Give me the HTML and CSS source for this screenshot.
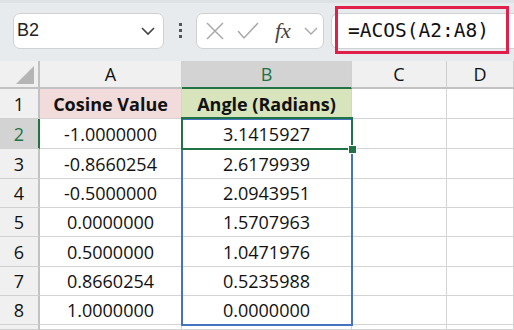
FILE: index.html
```html
<!DOCTYPE html>
<html>
<head>
<meta charset="utf-8">
<link rel="stylesheet" href="styles.css">
</head>
<body>
<div class="app">
  <div class="toolbar">
    <div class="namebox">
      <span class="name">B2</span>
      <svg class="chev" width="16" height="10" viewBox="0 0 16 10"><path d="M2 2 L8 8 L14 2" fill="none" stroke="#444" stroke-width="1.6"/></svg>
    </div>
    <div class="dots"><i></i><i></i><i></i></div>
    <div class="fxbox">
      <svg class="ico" width="20" height="20" viewBox="0 0 20 20"><path d="M2 2 L18 18 M18 2 L2 18" stroke="#a8a8a8" stroke-width="1.5" fill="none"/></svg>
      <svg class="ico" width="22" height="20" viewBox="0 0 22 20"><path d="M1 10 L7 17 L21 2" stroke="#a8a8a8" stroke-width="1.5" fill="none"/></svg>
      <span class="fx">fx</span>
      <svg class="chev2" width="14" height="10" viewBox="0 0 14 10"><path d="M1 2 L7 8 L13 2" fill="none" stroke="#a8a8a8" stroke-width="1.4"/></svg>
    </div>
    <div class="formula">
      <span class="ftext">=ACOS(A2:A8)</span>
      <div class="highlight"></div>
    </div>
  </div>
  <div class="grid">
    <div class="corner hdr"><span class="tri"></span></div>
    <div class="hdr col">A</div>
    <div class="hdr col selcol">B</div>
    <div class="hdr col">C</div>
    <div class="hdr col last">D</div>

    <div class="hdr row">1</div>
    <div class="cell pink bold">Cosine Value</div>
    <div class="cell green bold">Angle (Radians)</div>
    <div class="cell"></div><div class="cell"></div>

    <div class="hdr row selrow">2</div>
    <div class="cell">-1.0000000</div>
    <div class="cell">3.1415927</div>
    <div class="cell"></div><div class="cell"></div>

    <div class="hdr row">3</div>
    <div class="cell">-0.8660254</div>
    <div class="cell">2.6179939</div>
    <div class="cell"></div><div class="cell"></div>

    <div class="hdr row">4</div>
    <div class="cell">-0.5000000</div>
    <div class="cell">2.0943951</div>
    <div class="cell"></div><div class="cell"></div>

    <div class="hdr row">5</div>
    <div class="cell">0.0000000</div>
    <div class="cell">1.5707963</div>
    <div class="cell"></div><div class="cell"></div>

    <div class="hdr row">6</div>
    <div class="cell">0.5000000</div>
    <div class="cell">1.0471976</div>
    <div class="cell"></div><div class="cell"></div>

    <div class="hdr row">7</div>
    <div class="cell">0.8660254</div>
    <div class="cell">0.5235988</div>
    <div class="cell"></div><div class="cell"></div>

    <div class="hdr row">8</div>
    <div class="cell">1.0000000</div>
    <div class="cell">0.0000000</div>
    <div class="cell"></div><div class="cell"></div>

    <div class="hdr row"></div>
    <div class="cell"></div><div class="cell"></div><div class="cell"></div><div class="cell"></div>

    <div class="range"></div>
    <div class="sel"><span class="handle"></span></div>
  </div>
</div>
</body>
</html>
```

FILE: styles.css
```css
* { box-sizing: border-box; }
html, body { margin: 0; padding: 0; }
body { width: 514px; height: 330px; overflow: hidden; background: #fff; font-family: "Open Sans", sans-serif; }
.app { width: 514px; height: 330px; display: flex; flex-direction: column; overflow: hidden; }

.toolbar { height: 61px; background: #e8ebee; display: flex; align-items: center; padding-left: 13px; position: relative; flex-shrink: 0; box-shadow: inset 0 3px 0 #dfe2e5; }
.namebox { width: 151px; height: 36px; background: #fff; border: 1px solid #cfd2d5; border-radius: 7px; display: flex; align-items: center; justify-content: space-between; padding: 0 6px 0 3px; }
.name { font-family: "Liberation Sans", sans-serif; font-size: 18px; color: #222; }
.chev { margin-right: 1px; }
.dots { width: 32px; display: flex; flex-direction: column; align-items: center; gap: 3px; }
.dots i { width: 3px; height: 3px; background: #555; display: block; }
.fxbox { width: 128px; height: 36px; background: #fff; border: 1px solid #cfd2d5; border-radius: 7px; display: flex; align-items: center; padding-left: 8px; }
.fxbox .ico { margin-right: 12px; }
.fx { font-family: "Liberation Serif", serif; font-style: italic; font-size: 22px; color: #444; margin-left: 4px; margin-right: 13px; }
.formula { margin-left: 7px; flex: 1; height: 36px; background: #fff; border: 1px solid #cfd2d5; border-right: none; border-radius: 7px 0 0 7px; display: flex; align-items: center; padding-left: 16px; position: relative; }
.ftext { font-family: "DejaVu Sans Mono", monospace; font-size: 19.5px; color: #111; }
.highlight { position: absolute; left: 3px; top: -8px; width: 174px; height: 48px; border: 3px solid #e0204a; }

.grid { flex: 1; display: grid; grid-template-columns: 40px 142px 170px 95px 1fr; grid-template-rows: 28px 30px 30px 30px 29px 29px 30px 29px 29px 1fr; position: relative; }
.hdr { background: #f0f0f0; color: #111; display: flex; align-items: center; justify-content: center; font-size: 18px; font-family: "Open Sans", sans-serif; }
.col { border-right: 1px solid #d0d0d0; border-bottom: 2px solid #c2c2c2; }
.corner { border-right: 2px solid #c2c2c2; border-bottom: 2px solid #c2c2c2; position: relative; }
.tri { position: absolute; right: 4px; bottom: 3px; width: 0; height: 0; border-left: 18px solid transparent; border-bottom: 18px solid #b5b5b5; }
.row { border-right: 2px solid #c2c2c2; border-bottom: 1px solid #d0d0d0; }
.selcol { background: #d3d3d3; color: #217346; border-bottom: 2px solid #217346; }
.selrow { background: #d3d3d3; color: #217346; border-right: 2px solid #217346; }
.cell { border-right: 1px solid #d4d4d4; border-bottom: 1px solid #d4d4d4; display: flex; align-items: center; justify-content: center; font-size: 18px; color: #111; white-space: nowrap; }
.bold { font-weight: 700; }
.pink { background: #f2dcdb; }
.green { background: #d8e4bc; }

.range { position: absolute; grid-column: 3 / 4; grid-row: 3 / 10; top: -1px; left: -1px; right: -1px; bottom: -1px; border: 2px solid #4472c4; pointer-events: none; }
.sel { position: absolute; grid-column: 3 / 4; grid-row: 3 / 4; top: -2px; left: -1px; right: -1px; bottom: -1px; border: 2px solid #217346; }
.handle { position: absolute; right: -6px; bottom: -6px; width: 9px; height: 9px; background: #217346; border: 1px solid #fff; }
```
